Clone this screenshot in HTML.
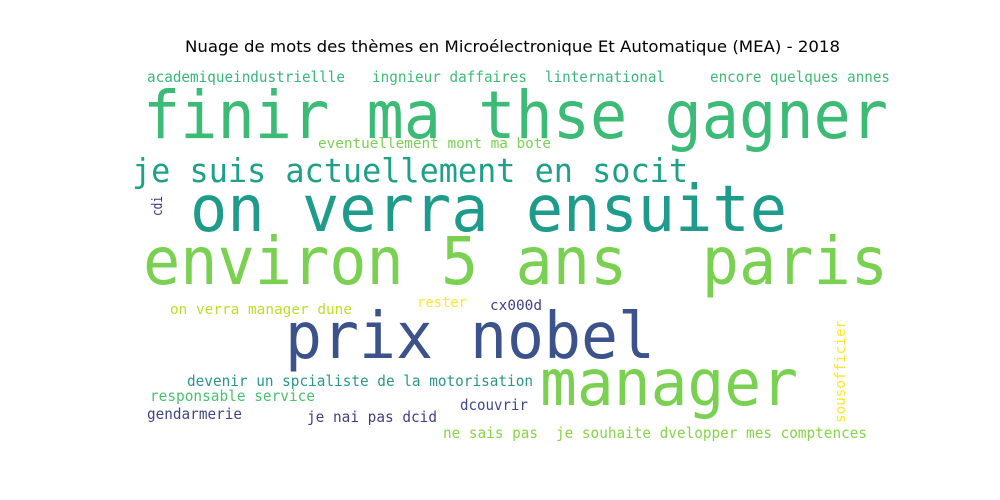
<!DOCTYPE html>
<html><head><meta charset="utf-8"><style>html,body{margin:0;padding:0;background:#fff}svg{display:block}text{white-space:pre}</style></head>
<body>
<svg width="1000" height="500" viewBox="0 0 1000 500" xmlns="http://www.w3.org/2000/svg" xml:space="preserve">
<rect width="1000" height="500" fill="#fff"/>
<text x="185" y="52" font-family="DejaVu Sans, Liberation Sans, sans-serif" font-size="16" fill="#000" textLength="655" lengthAdjust="spacingAndGlyphs">Nuage de mots des thèmes en Microélectronique Et Automatique (MEA) - 2018</text>
<g font-family="DejaVu Sans Mono, Liberation Mono, monospace">
<text x="147" y="82" font-size="15" fill="#35b779" textLength="198" lengthAdjust="spacingAndGlyphs">academiqueindustriellle</text>
<text x="372" y="82" font-size="15" fill="#3dbc74" textLength="155" lengthAdjust="spacingAndGlyphs">ingnieur daffaires</text>
<text x="545" y="82" font-size="15" fill="#38b77a" textLength="120" lengthAdjust="spacingAndGlyphs">linternational</text>
<text x="710" y="82" font-size="15" fill="#3fbb73" textLength="180" lengthAdjust="spacingAndGlyphs">encore quelques annes</text>
<text x="143" y="138" font-size="66" fill="#3bbb75" textLength="745" lengthAdjust="spacingAndGlyphs">finir ma thse gagner</text>
<text x="318" y="148" font-size="14" fill="#7ad151" textLength="233" lengthAdjust="spacingAndGlyphs">eventuellement mont ma bote</text>
<text x="132" y="182" font-size="33" fill="#1fa088" textLength="556" lengthAdjust="spacingAndGlyphs">je suis actuellement en socit</text>
<text transform="translate(162,216) rotate(-90)" font-size="14" fill="#46327e" textLength="20" lengthAdjust="spacingAndGlyphs">cdi</text>
<text x="190" y="231" font-size="64" fill="#1e9b8a" textLength="597" lengthAdjust="spacingAndGlyphs">on verra ensuite</text>
<text x="143" y="284" font-size="66" fill="#7ad151" textLength="745" lengthAdjust="spacingAndGlyphs">environ 5 ans  paris</text>
<text x="417" y="307" font-size="14" fill="#fde725" textLength="50" lengthAdjust="spacingAndGlyphs">rester</text>
<text x="490" y="310" font-size="14" fill="#424086" textLength="52" lengthAdjust="spacingAndGlyphs">cx000d</text>
<text x="170" y="314" font-size="14" fill="#bddf26" textLength="182" lengthAdjust="spacingAndGlyphs">on verra manager dune</text>
<text x="285" y="358" font-size="64" fill="#3b528b" textLength="370" lengthAdjust="spacingAndGlyphs">prix nobel</text>
<text x="187" y="386" font-size="15" fill="#2a968b" textLength="346" lengthAdjust="spacingAndGlyphs">devenir un spcialiste de la motorisation</text>
<text x="540" y="405" font-size="64" fill="#7ad151" textLength="258" lengthAdjust="spacingAndGlyphs">manager</text>
<text transform="translate(845,423) rotate(-90)" font-size="14" fill="#fde725" textLength="103" lengthAdjust="spacingAndGlyphs">sousofficier</text>
<text x="150" y="401" font-size="15" fill="#4ac16d" textLength="165" lengthAdjust="spacingAndGlyphs">responsable service</text>
<text x="460" y="410" font-size="15" fill="#3e4989" textLength="68" lengthAdjust="spacingAndGlyphs">dcouvrir</text>
<text x="147" y="419" font-size="15" fill="#414487" textLength="95" lengthAdjust="spacingAndGlyphs">gendarmerie</text>
<text x="307" y="422" font-size="15" fill="#433e85" textLength="130" lengthAdjust="spacingAndGlyphs">je nai pas dcid</text>
<text x="443" y="438" font-size="15" fill="#86d549" textLength="95" lengthAdjust="spacingAndGlyphs">ne sais pas</text>
<text x="556" y="438" font-size="15" fill="#86d549" textLength="311" lengthAdjust="spacingAndGlyphs">je souhaite dvelopper mes comptences</text>
</g>
</svg>
</body></html>
